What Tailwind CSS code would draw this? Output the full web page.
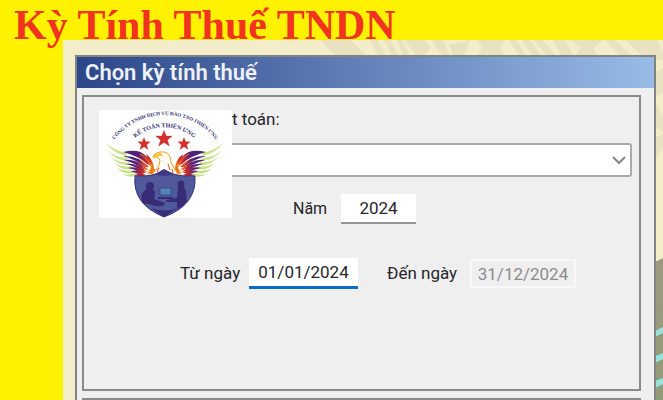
<!DOCTYPE html>
<html lang="vi">
<head>
    <meta charset="UTF-8">
    <meta name="viewport" content="width=device-width, initial-scale=1.0">
    <title>Kỳ Tính Thuế TNDN</title>
    <script src="https://cdn.jsdelivr.net/npm/@tailwindcss/browser@4"></script>
</head>
<body class="bg-[#fff200] h-screen overflow-hidden flex flex-col font-[Roboto,sans-serif] text-[#26262c]">
    <h1 class="relative z-10 h-10 pl-[14px] text-[42px] leading-[50px] font-bold text-[#f2331f] whitespace-nowrap font-['Liberation_Serif',serif]">Kỳ Tính Thuế TNDN</h1>

    <main class="relative flex-1 min-h-0 ml-[63px] pl-3 pr-[7px] pt-[15px] bg-[#f4edca] flex flex-col overflow-hidden">
        <!-- watermark behind the dialog -->
        <svg class="absolute top-0 right-0" width="350" height="360" viewBox="0 0 350 360" aria-hidden="true">
            <defs>
                <linearGradient id="olive" x1="0" y1="0" x2="0" y2="1">
                    <stop offset="0" stop-color="#9d997f"/>
                    <stop offset="1" stop-color="#909c79"/>
                </linearGradient>
            </defs>
            <g fill="#e9e2c0">
                <path d="M8 0h30l15 16H22zM57 0h7l9 16h-8zM71 0h6l9 16h-7zM84 0h5l8 16h-7zM91 0h20l7 7-6 9h-8zM119 0h11l7 16h-9zM136 5l21-5-6 16h-10zM165 0h26l-4 8 4 8h-27l5-8zM196 0h7l9 15h-6zM209 0h8l12 16h-9zM221 0h9l13 16h-10zM240 0h12l8 16h-12zM258 0h31l-8 8 3 8h-22l6-8zM292 0h10l16 16h-11zM312 0h32l6 12v8h-16z"/>
                <path d="M342 32l8-4v24l-7 4zM342 62l8 14v16l-8-6zM342 97l8-3v14l-8 12z"/>
            </g>
            <path d="M342 222l8-4v142h-8z" fill="url(#olive)"/>
            <path d="M342 291l8-4v6l-8 4zM342 316l8-3v6l-8 4zM342 341l8-3v6l-8 4z" fill="#96e2dc"/>
        </svg>

        <form class="relative flex-1 min-h-0 border-2 border-b-0 border-[#828484] bg-[#efefef] flex flex-col">
            <h2 class="h-[31px] shrink-0 pl-2 text-[22px] leading-[31px] font-semibold text-[#eef1f7] bg-linear-to-r from-[#2b4689] via-[#6481b9] to-[#99bce6]">Chọn kỳ tính thuế</h2>

            <div class="p-[5px] pr-[13px] pt-[7px] flex flex-col gap-[7px]">
                <div class="relative h-[296px] shrink-0 border-2 border-[#8a8a8a] pl-4 pr-[7px]">
                    <label for="kind" class="block pt-[10px] pl-[132px] text-[17px] leading-6">t toán:</label>

                    <div class="relative mt-3">
                        <select id="kind" class="block w-full h-[34px] appearance-none bg-white border-2 border-[#ababab] rounded-[3px] outline-none">
                            <option></option>
                        </select>
                        <svg class="absolute right-[6px] top-3 pointer-events-none" width="14" height="10" viewBox="0 0 14 10" fill="none" stroke="#858585" stroke-width="2" aria-hidden="true">
                            <path d="M1 2l6 6 6-6"/>
                        </svg>
                    </div>

                    <div class="mt-[17px] pl-[193px] flex items-center">
                        <label for="year" class="w-12 text-[16px]">Năm</label>
                        <input id="year" type="text" value="2024" class="w-[75px] h-[30px] bg-white border-b-2 border-[#969696] text-center text-[17px] outline-none">
                    </div>

                    <div class="mt-[34px] pl-20 flex items-center">
                        <label for="from" class="w-[69px] text-[17px]">Từ ngày</label>
                        <input id="from" type="text" value="01/01/2024" class="w-[109px] h-[31px] bg-white border-b-3 border-[#0b6bc6] text-center text-[17px] outline-none">
                        <label for="to" class="ml-[29px] w-[83px] text-[17px]">Đến ngày</label>
                        <input id="to" type="text" value="31/12/2024" disabled class="w-[106px] h-[29px] bg-[#efefef] border-2 border-[#f8f8f8] text-center text-[17px] text-[#8c8c8c]">
                    </div>

                    <!-- company logo laid over the form -->
                    <svg class="absolute left-[15px] top-[13px]" width="133" height="108" viewBox="0 0 133 108" role="img" aria-label="Kế Toán Thiên Ưng">
                        <defs>
                            <path id="arcOuter" d="M13 33A64 64 0 0 1 119 33"/>
                            <path id="arcInner" d="M30 34A46 46 0 0 1 101 34"/>
                            <path id="star" d="M0-10L2.6-3.5H9.5L4.1 1.2 6.2 8.3 0 4.2-6.2 8.3-4.1 1.2-9.5-3.5H-2.6Z"/>
                            <linearGradient id="feather" gradientUnits="userSpaceOnUse" x1="20" y1="46" x2="60" y2="60">
                                <stop offset="0" stop-color="#342577"/>
                                <stop offset=".42" stop-color="#552075"/>
                                <stop offset=".68" stop-color="#d52b28"/>
                                <stop offset="1" stop-color="#ffbd16"/>
                            </linearGradient>
                            <g id="wing">
                                <g fill="#c9e28a">
                                    <path d="M7 33Q16 41 28 43L27 46Q14 43 7 33Z"/>
                                    <path d="M8 40Q15 47 28 48L28 51Q16 50 8 40Z"/>
                                    <path d="M11 46Q18 53 30 52L30 55Q19 56 11 46Z"/>
                                    <path d="M15 52Q22 58 33 56L32 59Q22 61 15 52Z"/>
                                    <path d="M18 58Q25 62 35 60L33 63Q24 65 18 58Z"/>
                                    <path d="M23 64Q31 66 39 62L36 66Q29 68 23 64Z"/>
                                </g>
                                <g fill="url(#feather)">
                                    <path d="M24 42Q40 38 47 46Q53 51 54 57L48 54Q40 46 24 42Z"/>
                                    <path d="M24 46Q39 45 50 57L46 57Q38 50 24 46Z"/>
                                    <path d="M25 50Q38 48 49 60L44 59Q36 53 25 50Z"/>
                                    <path d="M27 54Q38 52 48 62L43 61Q36 56 27 54Z"/>
                                    <path d="M29 58Q38 55 47 63L42 63Q36 59 29 58Z"/>
                                    <path d="M32 62Q39 58 46 65L41 65Q37 62 32 62Z"/>
                                    <path d="M35 66Q41 61 47 65L43 67Q39 65 35 66Z"/>
                                    <path d="M47 44Q54 49 55 58L58 62 54 65 49 63 52 58Z"/>
                                </g>
                                <path d="M41 44Q49 48 52 57M42 50L51 62M43 55L49 64M53 54L50 65" fill="none" stroke="#ffad28" stroke-width=".7"/>
                            </g>
                        </defs>
                        <rect width="133" height="108" fill="#fff"/>
                        <g fill="#30286f" text-anchor="middle" class="font-bold font-['Liberation_Serif',serif]">
                            <text font-size="5"><textPath href="#arcOuter" startOffset="50%">CÔNG TY TNHH DỊCH VỤ ĐÀO TẠO THIÊN ƯNG</textPath></text>
                            <text font-size="6"><textPath href="#arcInner" startOffset="50%">KẾ TOÁN THIÊN ƯNG</textPath></text>
                        </g>
                        <g fill="#d52e2b" stroke="#9d2926" stroke-width=".4">
                            <use href="#star" transform="translate(65 29) scale(.85)"/>
                            <use href="#star" transform="translate(45 34) scale(.65)"/>
                            <use href="#star" transform="translate(85 34) scale(.65)"/>
                        </g>
                        <use href="#wing"/>
                        <use href="#wing" transform="translate(131 0) scale(-1 1)"/>
                        <!-- eagle -->
                        <path d="M54 47Q55 43 61 42Q69 41 71 47Q71 52 75 58L79 64 71 65 65 62 58 65 53 64 58 59Q61 55 61 50L58 47Z" fill="#fffdf4" stroke="#f49a22" stroke-width="1"/>
                        <path d="M54 47Q56 43 62 43L64 46Q60 45 59 47L57 46 55 49Z" fill="#f8c52a"/>
                        <path d="M69 54L71 60M73 59L74 63M60 58L58 62" fill="none" stroke="#e44d25" stroke-width="1"/>
                        <!-- shield -->
                        <path d="M36 66Q56 67 65 60Q75 67 96 66Q98 95 65 107Q33 94 36 66Z" fill="#50599b" stroke="#39317c" stroke-width="1"/>
                        <path d="M56 64L65 59 75 64Q65 68 56 64Z" fill="#403681"/>
                        <g fill="#392c77">
                            <circle cx="51" cy="76" r="4"/>
                            <path d="M47 79Q54 77 56 82L55 89 66 93 64 96Q55 97 50 94L44 94Q39 86 47 79Z"/>
                            <circle cx="82" cy="74" r="3.5"/>
                            <path d="M79 77Q86 75 87 82L88 91Q84 97 78 99L78 92 67 92 67 90 78 88Z"/>
                            <path d="M52 98Q66 103 79 98L65 107Z"/>
                            <path d="M59 87H74V89H59Z"/>
                        </g>
                        <path d="M61 78H72V85H61Z" fill="#5385bd" stroke="#354581" stroke-width=".8"/>
                    </svg>
                </div>
                <div class="h-[80px] shrink-0 border-2 border-[#8a8a8a]"></div>
            </div>
        </form>
    </main>
</body>
</html>
